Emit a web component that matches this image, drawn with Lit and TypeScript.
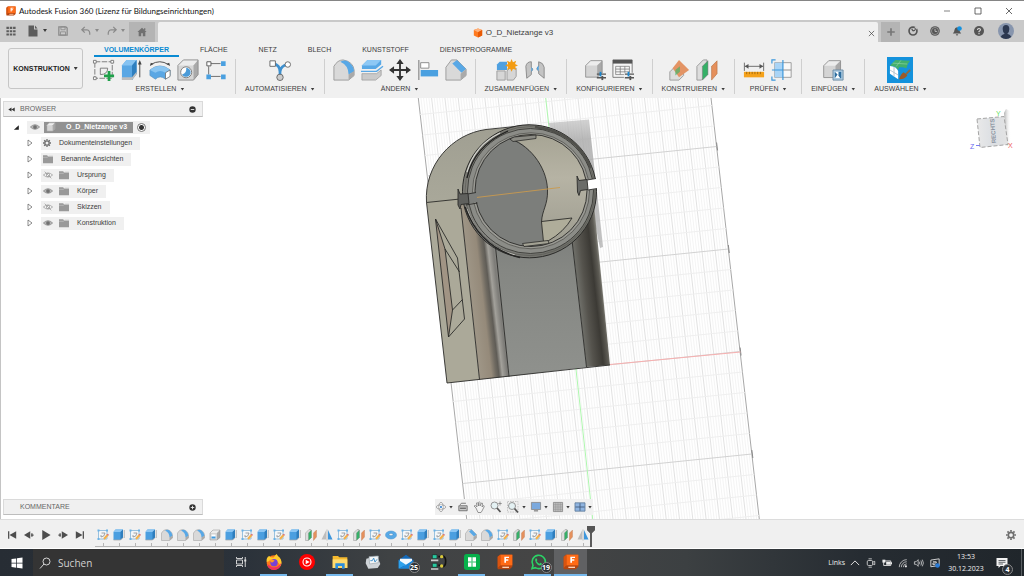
import { LitElement, html, svg, css, nothing } from "lit";
import { customElement } from "lit/decorators.js";
import { classMap } from "lit/directives/class-map.js";

const cube = svg`<path d="M2 8 8 2H22V17L16 22H2Z" fill="#d4d4d4"/><path d="M2 8 8 2H22L16 8Z" fill="#ececec"/><path d="M16 8 22 2V17L16 22Z" fill="#a9a9a9"/><path d="M2 8 8 2H22V17L16 22H2Z" fill="none" stroke="#8c8c8c"/>`;
const sliders = svg`<path d="M14 16.500H24M14 20.500H24" stroke="#555" stroke-width="1.500"/><path d="M18 14V19" stroke="#1a86d0" stroke-width="2"/><path d="M20 18.500V23" stroke="#555" stroke-width="2"/>`;
const fusion = svg`<path d="M4 1H23V19L19 23H1V4Z" fill="#b5450f"/><path d="M5 1H23V17H5Z" fill="#ff6b16"/><path d="M1 4 5 1V17L1 21Z" fill="#d9540f"/><path d="M11 13V4H18V6H13.500V8H17V10H13.500V13Z" fill="#fff"/><path d="M8 20H18" stroke="#ffd2b5" stroke-width="2"/>`;

/* Glyphs share a 24-unit box. */
const glyphs: Record<string, unknown> = {
  app: fusion,
  minus: svg`<path d="M3 12H21" stroke="#444" stroke-width="2"/>`,
  square: svg`<path d="M3 3H21V21H3Z" fill="none" stroke="#444" stroke-width="2.400"/>`,
  close: svg`<path d="M3 3 21 21M21 3 3 21" stroke="#444" stroke-width="2.400"/>`,
  plus: svg`<path d="M12 3V21M3 12H21" stroke="#777" stroke-width="4"/>`,
  grid: svg`<path d="M1 2h6v5H1zM9 2h6v5H9zM17 2h6v5h-6zM1 10h6v5H1zM9 10h6v5H9zM17 10h6v5h-6zM1 18h6v5H1zM9 18h6v5H9zM17 18h6v5h-6z" fill="#5c5c5c"/>`,
  file: svg`<path d="M3 1H14V9H21V23H3Z" fill="#5c5c5c"/><path d="M16 1 21 7H16Z" fill="#5c5c5c"/>`,
  save: svg`<path d="M2 2H19L22 5V22H2Z" fill="none" stroke="#8a8a8a" stroke-width="3"/><path d="M7 2H17V9H7ZM6 14H18V22H6Z" fill="none" stroke="#8a8a8a" stroke-width="2"/>`,
  undo: svg`<path d="M9 2 2 9 9 16M3 9H14Q22 10 21 21" fill="none" stroke="#8a8a8a" stroke-width="3"/>`,
  redo: svg`<path d="M15 2 22 9 15 16M21 9H10Q2 10 3 21" fill="none" stroke="#8a8a8a" stroke-width="3"/>`,
  home: svg`<path d="M12 2 23 12H20V22H14V15H10V22H4V12H1Z" fill="#707070"/><path d="M17 3h3v5h-3z" fill="#707070"/>`,
  doc: svg`<path d="M12 1 22 5V18L12 23 2 18V5Z" fill="#ff7a1f"/><path d="M12 1 22 5 12 10 2 5Z" fill="#ffb27c"/><path d="M12 10 22 5V18L12 23Z" fill="#e85a05"/>`,
  ext: svg`<circle cx="12" cy="12" r="9.500" fill="none" stroke="#555" stroke-width="4"/><path d="M12 12 9 7M12 12 17 10M18 3V9" stroke="#555" stroke-width="3"/><path d="M15 2 22 1 21 9Z" fill="#c4c4c4"/>`,
  clock: svg`<circle cx="12" cy="12" r="11.500" fill="#555"/><circle cx="12" cy="12" r="8.500" fill="none" stroke="#c9c9c9" stroke-width="1.200"/><path d="M12 7V13H17" fill="none" stroke="#c9c9c9" stroke-width="2"/>`,
  bell: svg`<path d="M2 18Q6 14 6 9 7 3 12 3T18 9Q18 14 22 18Z" fill="#555"/><path d="M9 20H15L12 24Z" fill="#555"/><circle cx="18" cy="6" r="5.500" fill="#1492e0"/>`,
  help: svg`<circle cx="12" cy="12" r="12" fill="#555"/><path d="M8.500 9.500Q8.500 6 12 6T15.500 9Q15.500 11 12 13V15M12 17V19.500" fill="none" stroke="#ddd" stroke-width="2.600"/>`,
  avatar: svg`<circle cx="12" cy="12" r="12" fill="#8795ad"/><path d="M12 3Q17 3 17 9 17 14 14 16 19 17 20 21 12 27 4 21 5 17 10 16 7 14 7 9 7 3 12 3Z" fill="#2c3850"/>`,
  sketchNew: svg`<path d="M2 3H21V21H2Z" fill="none" stroke="#777" stroke-dasharray="6 1.500"/><path d="M8 15V10H16Q16 17 8 17Z" fill="none" stroke="#777"/><path d="M.5 1.500h3v3h-3zM19.500 1.500h3v3h-3zM.5 19.500h3v3h-3z" fill="#fff" stroke="#777"/><path d="M17.500 13V24M12 18.500H23" stroke="#1fa04a" stroke-width="3"/>`,
  extrude: svg`<path d="M1 7 6 1H17V16L12 23H1Z" fill="#5aa7e4"/><path d="M1 7 6 1H17L12 7Z" fill="#86c3f2"/><path d="M12 7 17 1V16L12 23Z" fill="#2f7fbf"/><path d="M1 20H12L17 14V17L12 23H1Z" fill="#bdbdbd"/><path d="M20.500 20V4" stroke="#444"/><path d="M18.500 6 20.500 1 22.500 6Z" fill="#444"/>`,
  revolve: svg`<path d="M1 12Q12 3 23 12V18L18 22Q12 17 7 22L1 18Z" fill="#5aa7e4" stroke="#5c93bd" stroke-width=".7"/><path d="M1 12Q12 3 23 12L18 15Q12 11 7 15Z" fill="#8ac5f1"/><path d="M18 15 23 12V19L18 22Z" fill="#fff" stroke="#666" stroke-width=".8"/><path d="M2 6Q12 0 21 6" fill="none" stroke="#444"/><path d="M1 7.500 2 4 5 5.500ZM23 7.500 22 4 19 5.500Z" fill="#444"/>`,
  hole: svg`<path d="M1 7 7 1H23V17L18 23H1Z" fill="#d6d6d6"/><path d="M1 7 7 1H23L18 7Z" fill="#ececec"/><path d="M18 7 23 1V17L18 23Z" fill="#a9a9a9"/><path d="M1 7 7 1H23V17L18 23H1Z" fill="none" stroke="#8c8c8c"/><circle cx="10" cy="14.500" r="6" fill="#fff" stroke="#777"/><path d="M10 9.500A5 5 0 1 1 5.500 17Q11 15 10 9.500Z" fill="#4b9bd8"/>`,
  pattern: svg`<path d="M6 5H17M4 8V17M6 19H17" stroke="#666"/><path d="M2 3h4.500v4.500H2z" fill="#fff" stroke="#555"/><path d="M17.500 2.500h5v5h-5zM1.500 17h5v5h-5zM17.500 17h5v5h-5z" fill="#4aa0e0"/>`,
  auto: svg`<path d="M4 5Q12 6 12 14V19M20 6Q13 7 12 14" fill="none" stroke="#3e90cf" stroke-width="3"/><path d="M1 2h6v6H1z" fill="#fff" stroke="#666"/><circle cx="20.500" cy="6" r="3" fill="#fff" stroke="#666"/><circle cx="12" cy="20" r="3.500" fill="#ccc" stroke="#666"/>`,
  fillet: svg`<path d="M1 8Q5 1 11 1 22 3 23 12V18L17 23H1Z" fill="#d9d9d9" stroke="#999"/><path d="M8 3Q14 0 18 4 23 8 23 14L17 17Q17 7 8 3Z" fill="#58a8e6"/><path d="M17 17 23 13V18L17 23Z" fill="#aaa"/>`,
  press: svg`<path d="M1 7 7 1H22V6L16 11H1Z" fill="#58a8e6"/><path d="M1 7 7 1H22L16 7Z" fill="#8dc8f5"/><path d="M0 13.500H17L24 8" fill="none" stroke="#58a8e6" stroke-width="1.500"/><path d="M1 16H17L22 12V18L16 23H1Z" fill="#cacaca" stroke="#999" stroke-width=".8"/>`,
  move: svg`<path d="M12 3V21M3 12H21" stroke="#333" stroke-width="2"/><path d="M12 0 16 5.500H8ZM12 24 8 18.500H16ZM0 12 5.500 8V16ZM24 12 18.500 16V8Z" fill="#333"/>`,
  align: svg`<path d="M2 1V23" stroke="#888" stroke-width="1.300"/><path d="M4 4H13V10H4Z" fill="#fff" stroke="#888"/><path d="M4 12H23V19H4Z" fill="#4aa0e0"/>`,
  chamfer: svg`<path d="M1 9 7 1H13L23 11V18L17 23H1Z" fill="#d9d9d9" stroke="#999"/><path d="M8 5 13 1 23 11 18 15Z" fill="#58a8e6"/><path d="M17 16 23 11V18L17 23Z" fill="#aaa"/>`,
  join: svg`<path d="M1 6 4 3H12V12H1Z" fill="#4fa0e0"/><path d="M1 13H10V23H1ZM12 13 15 10H22V19L19 23H12Z" fill="#d6d6d6" stroke="#999"/><path d="M17 0 18.500 3.500 22 2 20.800 5.500 24 7 20.800 8.500 22 12 18.500 10.500 17 14 15.500 10.500 12 12 13.200 8.500 10 7 13.200 5.500 12 2 15.500 3.500Z" fill="#f39c12"/>`,
  joint: svg`<path d="M2 8Q3 3 8 3V9Q11 11 8 14V17L3 21Z" fill="#c4c4c4" stroke="#888"/><path d="M22 21 16 16V13Q12 11 16 8V3Q21 4 22 9Z" fill="#c4c4c4" stroke="#888"/><path d="M8 9Q11 11 8 14ZM16 7Q12 10 16 13Z" fill="#4aa0e0"/>`,
  config: svg`<g transform="scale(.9)">${cube}</g>${sliders}`,
  table: svg`<path d="M1 1H22V20H1Z" fill="#f6f6f6" stroke="#777"/><path d="M1 1H22V5H1Z" fill="#555"/><path d="M4 8H19V17H4ZM4 11H19M4 14H19M9 8V17M14 8V17" fill="none" stroke="#777" stroke-width=".8"/><path d="M13 15H24V24H13Z" fill="#f0f0f0"/>${sliders}`,
  planeOff: svg`<path d="M2 14 7 9H17V18L12 23H2Z" fill="#ddd" stroke="#999"/><path d="M12 1 23 12 12 20 5 10Z" fill="#e39465"/><path d="M13 8 8 12V18L13 14Z" fill="#46b36b" opacity=".7"/>`,
  midplane: svg`<path d="M1 8 8 1H12V17L6 23H1Z" fill="#ddd" stroke="#999"/><path d="M7 8 13 2V17L7 23Z" fill="#35b067" stroke="#777" stroke-width=".6"/><path d="M17 8 23 2V16L17 23Z" fill="#e5905c" stroke="#b06a3d" stroke-width=".6"/>`,
  measure: svg`<path d="M2 8H22M1.500 4V13M22.500 4V13" stroke="#666"/><path d="M2 8 6 5.500V10.500ZM22 8 18 5.500V10.500Z" fill="#555"/><path d="M1 14H23V20H1Z" fill="#f5a21b"/><path d="M4 14V16.500M7 14V16.500M10 14V16.500M13 14V16.500M16 14V16.500M19 14V16.500" stroke="#8d5a08" stroke-width=".8"/>`,
  section: svg`<path d="M4 4H22V20H4Z" fill="#f8f8f8" stroke="#999"/><path d="M4 4H13V20H4Z" fill="#a9d4f6"/><path d="M1 5V1H5M1 19V23H5M13 1V23M1 12H13" fill="none" stroke="#3b97db" stroke-width="1.300"/><path d="M13 12H22" stroke="#888"/>`,
  insert: svg`<g transform="scale(.92)">${cube}</g><path d="M12 12H23V23H12Z" fill="#aecde4" stroke="#6c8ba3"/><path d="M14 14H21V21H14Z" fill="#2f6e9f"/><path d="M14 14 18 18V14ZM14 21 17 17 20 21Z" fill="#fff"/>`,
  select: svg`<path d="M1 7 7 1 23 2Q20 5 19 10L15 9 11 9 10 12Q8 8 1 7Z" fill="#43b06c"/><path d="M4 4.500 20 5.500M13 1.500 8 8" fill="none" stroke="#8fd3a8" stroke-width=".7"/><path d="M1 7.500Q8 8 10 13V22L1 16Z" fill="#fff"/><path d="M1 12 10 17.500M5.500 8.500V19" stroke="#b3c4cd"/><path d="M23 12 18 17" stroke="#8b6a45" stroke-width="2"/><path d="M16 14.500 20 18Q17 22.500 11 22 13 16 16 14.500Z" fill="#9c5a28"/>`,
  body: svg`${cube}`,
  eye: svg`<path d="M1 12Q12 1 23 12 12 23 1 12Z" fill="#b5b5b5" stroke="#8e8e8e" stroke-width="2"/><circle cx="12" cy="12" r="4.500" fill="#707070"/>`,
  eyeOff: svg`<path d="M1 12Q12 2 23 12 12 22 1 12Z" fill="#f4f4f4" stroke="#9a9a9a" stroke-width="1.800"/><circle cx="12" cy="12" r="4" fill="none" stroke="#9a9a9a" stroke-width="1.800"/><path d="M4 4 20 20" stroke="#9a9a9a" stroke-width="1.800"/>`,
  folder: svg`<path d="M0 3H10L12 6H24V22H0Z" fill="#999"/><path d="M0 8H11L14 5H24" fill="none" stroke="#c6c6c6" stroke-width="1.500"/>`,
  gear: svg`<circle cx="12" cy="12" r="6.500" fill="none" stroke="#6e6e6e" stroke-width="4"/><path d="M12 0V4M12 20V24M0 12H4M20 12H24M3.500 3.500 6.500 6.500M17.500 17.500 20.500 20.500M20.500 3.500 17.500 6.500M6.500 17.500 3.500 20.500" stroke="#6e6e6e" stroke-width="4"/>`,
  triRight: svg`<path d="M6 3 18 12 6 21Z" fill="#fff" stroke="#555" stroke-width="2"/>`,
  triOpen: svg`<path d="M20 4V20H3Z" fill="#222"/>`,
  collapse: svg`<path d="M12 5V19L1 12ZM23 5V19L12 12Z" fill="#333"/>`,
  dotMinus: svg`<circle cx="12" cy="12" r="11" fill="#333"/><path d="M6 12H18" stroke="#eee" stroke-width="3"/>`,
  dotPlus: svg`<circle cx="12" cy="12" r="11" fill="#333"/><path d="M6 12H18M12 6V18" stroke="#eee" stroke-width="3"/>`,
  orbit: svg`<ellipse cx="12" cy="12" rx="11" ry="5" fill="none" stroke="#888" stroke-width="1.600"/><ellipse cx="12" cy="12" rx="5" ry="11" fill="none" stroke="#888" stroke-width="1.600"/><path d="M12 8V16M8 12H16" stroke="#f4f7fa" stroke-width="5"/><circle cx="12" cy="12" r="2.500" fill="#2f7fd0"/>`,
  look: svg`<path d="M2 9H22V21H2Z" fill="#c9c9c9" stroke="#666" stroke-width="2"/><path d="M5 15H19" stroke="#666" stroke-width="3"/><path d="M5 7 8 3H19" fill="none" stroke="#666" stroke-width="2"/>`,
  hand: svg`<path d="M6 14 2 10Q4 7 8 12L7 4Q9 2 10 5L11 10V3Q13 0 14 3V10L17 4Q19 3 19 6L18 12 21 9Q23 9 22 12L18 20 16 23H10Z" fill="#f4f4f4" stroke="#777" stroke-width="1.500"/>`,
  zoom: svg`<circle cx="9" cy="9" r="7" fill="#e4f1f3" stroke="#8a8a8a" stroke-width="1.800"/><path d="M14 14 21 22" stroke="#555" stroke-width="3.500"/><path d="M20 1V9M16.500 5H23.500" stroke="#777" stroke-width="1.400"/>`,
  fit: svg`<path d="M1 1H22V22H1Z" fill="none" stroke="#999" stroke-dasharray="3 2"/><circle cx="10" cy="10" r="7" fill="#e4f1f3" stroke="#8a8a8a" stroke-width="1.800"/><path d="M15 15 22 23" stroke="#555" stroke-width="3.500"/>`,
  screen: svg`<path d="M1 1H23V18H1Z" fill="#7ba9dd" stroke="#888" stroke-width="2"/><path d="M7 21H17" stroke="#999" stroke-width="4"/>`,
  mesh: svg`<path d="M1 1H23V23H1Z" fill="#bdbdbd" stroke="#777" stroke-width="1.600"/><path d="M1 6.500H23M1 12H23M1 17.500H23M6.500 1V23M12 1V23M17.500 1V23" stroke="#888"/>`,
  views: svg`<path d="M0 2H24V22H0Z" fill="#8fb4e0" stroke="#5d7897" stroke-width="2"/><path d="M12 3V21M1 12H23" stroke="#3c5674" stroke-width="2"/>`,
  first: svg`<path d="M4 3V21" stroke="#4d4d4d" stroke-width="3"/><path d="M22 3V21L6 12Z" fill="#4d4d4d"/>`,
  prev: svg`<path d="M15 3V21L0 12Z" fill="#4d4d4d"/><path d="M17 12H23M19 8V16" stroke="#4d4d4d" stroke-width="3"/>`,
  play: svg`<path d="M3 0 23 12 3 24Z" fill="#4d4d4d"/>`,
  next: svg`<path d="M9 3V21L24 12Z" fill="#4d4d4d"/><path d="M1 12H7M5 8V16" stroke="#4d4d4d" stroke-width="3"/>`,
  last: svg`<path d="M20 3V21" stroke="#4d4d4d" stroke-width="3"/><path d="M2 3V21L18 12Z" fill="#4d4d4d"/>`,
  tSketch: svg`<path d="M3 3H20V20H3Z" fill="#f2f6f9" stroke="#8fbbdb" stroke-width="1.800"/><path d="M9 8H16Q15 16 8 16V12" fill="none" stroke="#8a8a8a" stroke-width="1.500"/><path d="M1 1h4v4H1zM18 1h4v4h-4zM1 18h4v4H1z" fill="#6bb2e6"/><path d="M21 12 14 20" stroke="#f4b04a" stroke-width="4"/><path d="M22.500 10.500 21 12.500" stroke="#d8707f" stroke-width="4"/>`,
  tExtrude: svg`<path d="M1 6 5 1H20V17L15 22H1Z" fill="#4b9fe0"/><path d="M1 6 5 1H20L15 6Z" fill="#8cc6f3"/><path d="M15 6 20 1V17L15 22Z" fill="#2f7ebd"/><path d="M22.500 2V18" stroke="#999" stroke-width="1.300"/><path d="M1 22H15L20 17" fill="none" stroke="#aaa" stroke-width="1.500"/>`,
  tShell: svg`${cube}<path d="M5 11H13V19H5Z" fill="#fff"/><path d="M5 15H13V19H5Z" fill="#3f9be0"/>`,
  tMirror: svg`<path d="M10 3V21H1Z" fill="#bdbdbd"/><path d="M14 2 23 21H14Z" fill="#3d96dc"/><path d="M12 1V23" stroke="#888"/>`,
  tTorus: svg`<ellipse cx="12" cy="12" rx="11" ry="8" fill="#57a9e7" stroke="#4a92cb"/><ellipse cx="12" cy="11" rx="4" ry="2.500" fill="#f0f0f0" stroke="#2f7ebd"/>`,
  win: svg`<path d="M1 4 10.500 3V11.500H1ZM12 2.700 23 1V11.500H12ZM1 13H10.500V21.500L1 20ZM12 13H23V23L12 21.500Z" fill="#fff"/>`,
  search: svg`<circle cx="15" cy="9" r="7" fill="none" stroke="#e6e6e6" stroke-width="1.800"/><path d="M10 14 2 23" stroke="#e6e6e6" stroke-width="1.800"/>`,
  taskview: svg`<path d="M3 2V5H15V2M3 22V19H15V22M3 8H15V16H3Z" fill="none" stroke="#e0e0e0" stroke-width="1.800"/><path d="M20.500 2V22" stroke="#e0e0e0" stroke-width="1.800"/><path d="M18.500 7H22.500V11H18.500Z" fill="#e0e0e0"/>`,
  firefox: svg`<circle cx="12" cy="13" r="11" fill="#ff7a1a"/><path d="M1 12Q0 5 5 3 7 6 12 5 13 2 16 0 18 4 21 6 25 12 22 18 17 8 9 9Z" fill="#ffcb2e"/><path d="M2 15Q3 24 13 24 22 22 23 13 17 22 8 19Z" fill="#f0315e"/><circle cx="12" cy="13" r="5.500" fill="#7542d6"/><path d="M4 9Q9 7 13 10L9 13Z" fill="#ff9a1f"/>`,
  yt: svg`<circle cx="12" cy="12" r="12" fill="#f00"/><circle cx="12" cy="12" r="6" fill="none" stroke="#fff" stroke-width="1.600"/><path d="M10 8.500 16 12 10 15.500Z" fill="#fff"/>`,
  explorer: svg`<path d="M1 3H9L11 5H23V21H1Z" fill="#f5b92e"/><path d="M1 8H23V21H1Z" fill="#ffdb6e"/><path d="M5 22V14H19V22H15V18H9V22Z" fill="#2d8fdc"/>`,
  monitor: svg`<path d="M2 7 18 3 23 15 19 21 5 22 1 14Z" fill="#cfd4d8"/><path d="M6 4 20 3V13L7 15Z" fill="#f3f6f8" stroke="#9aa4ac"/><path d="M8 10 11 10 13 6 15 12 18 8" fill="none" stroke="#4a96cc" stroke-width="1.500"/>`,
  mail: svg`<path d="M1 9 12 1 23 9V21H1Z" fill="#1368b8"/><path d="M3 7H21V14L12 18 3 14Z" fill="#f4f9fd"/><path d="M1 9 12 16 1 22Z" fill="#2ea2ec"/><path d="M23 9 9 18 1 22H23Z" fill="#1c86d8"/>`,
  net: svg`<path d="M2 1H9V7H2ZM2 14H9V20H2Z" fill="#27c9a0" stroke="#222"/><path d="M0 9.500H11M0 22.500H11" stroke="#ccc" stroke-width="2.500"/><path d="M11 4H14M11 17H14M18 3Q22 4 22 11 22 18 18 19" fill="none" stroke="#111" stroke-width="2.500"/><circle cx="16" cy="4" r="2.500" fill="#d9c93b"/><circle cx="16" cy="18" r="2.500" fill="#d9c93b"/>`,
  green: svg`<rect width="24" height="24" rx="4" fill="#07b04b"/><path d="M6 5H11.300V19H6ZM12.700 5H18V19H12.700Z" fill="#fff"/><path d="M6 12H11.300M12.700 12H18" stroke="#07b04b" stroke-width="1.300"/>`,
  whatsapp: svg`<path d="M3 22 4.500 17A10 10 0 1 1 8 20.500Z" fill="none" stroke="#2bd366" stroke-width="2.400"/><path d="M8 7Q10 5 11 9L10 11Q12 14 14 14.500L16 13Q19 14 17 16.500 13 19 9 13 7 9 8 7Z" fill="#2bd366"/>`,
  chevron: svg`<path d="M2 17 12 7 22 17" fill="none" stroke="#eee" stroke-width="2.200"/>`,
  cam: svg`<rect x="3" y="6" width="13" height="12" rx="3" fill="none" stroke="#eee" stroke-width="1.800"/><path d="M16 10 21 8V16L16 14M6 2H14M6 22H14" fill="none" stroke="#eee" stroke-width="1.800"/>`,
  battery: svg`<path d="M4 7H21V18H4Z" fill="none" stroke="#eee" stroke-width="2"/><path d="M10 9H20V16H10ZM21 10H24V15H21Z" fill="#eee"/><path d="M1 4H8V11H1Z" fill="#eee"/>`,
  wifi: svg`<path d="M3 22A18 18 0 0 1 21 4M8 22A13 13 0 0 1 21 9M13 22A8 8 0 0 1 21 14" fill="none" stroke="#ddd" stroke-width="1.800"/><circle cx="19" cy="20" r="2.500" fill="#eee"/>`,
  sound: svg`<path d="M1 9H5L10 4V20L5 15H1Z" fill="none" stroke="#eee" stroke-width="1.600"/><path d="M13 9Q15 12 13 15M16.500 6Q20 12 16.500 18M20 4Q25 12 20 20" fill="none" stroke="#eee" stroke-width="1.600"/>`,
  pen: svg`<path d="M2 5 22 2V18L2 21Z" fill="none" stroke="#eee" stroke-width="2"/><path d="M7 9H15V12H7V16H13" fill="none" stroke="#eee" stroke-width="2"/><circle cx="18" cy="18" r="5.500" fill="#2b7bd6"/>`,
  note: svg`<path d="M1 2H23V18H9L5 22V18H1Z" fill="#f2f2f2"/><path d="M5 7H19M5 10.500H19M5 14H14" stroke="#30363c" stroke-width="1.500"/>`,
};
glyphs.tFillet = glyphs.fillet;
glyphs.tChamfer = glyphs.chamfer;
glyphs.tPlane = glyphs.midplane;

const icon = (name: string, size: string) =>
  html`<svg class="icon ${size}" viewBox="0 0 24 24" aria-hidden="true">${glyphs[name]}</svg>`;
const caret = html`<span class="caret"></span>`;

const tabs = ["VOLUMENKÖRPER", "FLÄCHE", "NETZ", "BLECH", "KUNSTSTOFF", "DIENSTPROGRAMME"];

const groups = [
  { label: "ERSTELLEN", tools: ["sketchNew", "extrude", "revolve", "hole", "pattern"] },
  { label: "AUTOMATISIEREN", tools: ["auto"] },
  { label: "ÄNDERN", tools: ["fillet", "press", "move", "align", "chamfer"] },
  { label: "ZUSAMMENFÜGEN", tools: ["join", "joint"] },
  { label: "KONFIGURIEREN", tools: ["config", "table"] },
  { label: "KONSTRUIEREN", tools: ["planeOff", "midplane"] },
  { label: "PRÜFEN", tools: ["measure", "section"] },
  { label: "EINFÜGEN", tools: ["insert"] },
  { label: "AUSWÄHLEN", tools: ["select"] },
];

const nodes = [
  { label: "Dokumenteinstellungen", icons: ["gear"] },
  { label: "Benannte Ansichten", icons: ["folder"] },
  { label: "Ursprung", icons: ["eyeOff", "folder"] },
  { label: "Körper", icons: ["eye", "folder"] },
  { label: "Skizzen", icons: ["eyeOff", "folder"] },
  { label: "Konstruktion", icons: ["eye", "folder"] },
];

const features = (
  "tSketch tExtrude tSketch tExtrude tFillet tFillet tFillet tShell tExtrude tSketch tExtrude tSketch tExtrude tPlane tMirror " +
  "tSketch tPlane tSketch tTorus tSketch tExtrude tSketch tExtrude tChamfer tFillet tSketch tPlane tSketch tExtrude tPlane tMirror"
).split(" ");

const apps: { icon: string; badge?: string; open?: boolean; active?: boolean }[] = [
  { icon: "taskview" },
  { icon: "firefox", open: true },
  { icon: "yt" },
  { icon: "explorer", open: true },
  { icon: "monitor" },
  { icon: "mail", badge: "25" },
  { icon: "net" },
  { icon: "green", open: true },
  { icon: "app" },
  { icon: "whatsapp", badge: "19", open: true },
  { icon: "app", open: true, active: true },
];

/* Ground grid: a slanted sheet between two long edges. */
const leftX = (y: number) => 418.3 + 0.115 * (y - 98);
const rightX = (y: number) => 711 + 0.1147 * (y - 98);

function gridLines() {
  const out = [];
  const cells = 22;
  for (let i = 0; i <= cells * 5; i++) {
    const t = i / (cells * 5);
    const a = leftX(98) + (rightX(98) - leftX(98)) * t;
    const b = leftX(519) + (rightX(519) - leftX(519)) * t;
    const kind = i === 0 || i === cells * 5 ? "edge" : i % 5 === 0 ? "cell" : "fine";
    out.push(svg`<line class=${kind} x1=${a} y1="98" x2=${b} y2="519"/>`);
  }
  for (let k = -3; k < 22; k++) {
    const y = 146.5 + 20.5 * k;
    const yl = y + 29.5;
    out.push(svg`<line class=${k % 5 === 0 ? "major" : "row"} x1=${rightX(y)} y1=${y} x2=${leftX(yl)} y2=${yl}/>`);
    if (k % 5 === 0) out.push(svg`<line class="tick" x1=${rightX(y)} y1=${y - 4} x2=${rightX(y) + 1} y2=${y + 4}/>`);
  }
  return out;
}

@customElement("fusion-scene")
class FusionScene extends LitElement {
  static styles = css`
    :host { display: block; width: 100%; height: 100%; }
    .scene { display: block; width: 100%; height: 100%; }
    line { stroke-width: 1; }
    .fine { stroke: #f4f4f4; }
    .cell { stroke: #e2e2e2; }
    .row { stroke: #efefef; }
    .major { stroke: #d2d2d2; }
    .edge { stroke: #a8a8a8; }
    .tick { stroke: #888; }
    .ink { fill: none; stroke: #2b2b29; stroke-width: 0.9; }
    .axis { font: 7px "Liberation Sans", Arial, sans-serif; }
    .face { font: bold 6px "Liberation Sans", Arial, sans-serif; fill: #8b93a0; }
  `;

  render() {
    return html`<svg class="scene" viewBox="0 98 1024 421" preserveAspectRatio="xMaxYMid slice" role="img" aria-label="O_D_Nietzange v3">
      <defs>
        <linearGradient id="strip" gradientUnits="userSpaceOnUse" x1="467" y1="300" x2="502" y2="296">
          <stop offset="0" stop-color="#a29a8b"/><stop offset=".45" stop-color="#958a7a"/><stop offset=".58" stop-color="#6f6a61"/>
          <stop offset=".66" stop-color="#5f5c56"/><stop offset=".76" stop-color="#a3a19b"/><stop offset=".9" stop-color="#7d7c78"/><stop offset="1" stop-color="#8a8a86"/>
        </linearGradient>
        <linearGradient id="dark" gradientUnits="userSpaceOnUse" x1="577" y1="300" x2="604" y2="297">
          <stop offset="0" stop-color="#777872"/><stop offset=".35" stop-color="#55534d"/><stop offset=".7" stop-color="#3c3a35"/><stop offset=".9" stop-color="#5d5b54"/><stop offset="1" stop-color="#85847c"/>
        </linearGradient>
        <linearGradient id="side" x1="0" y1="0" x2="0" y2="1"><stop offset="0" stop-color="#a09f92"/><stop offset="1" stop-color="#afae9f"/></linearGradient>
        <linearGradient id="front" x1="0" y1="0" x2="0" y2="1"><stop offset="0" stop-color="#7c7e7b"/><stop offset=".3" stop-color="#858783"/><stop offset="1" stop-color="#8f918d"/></linearGradient>
        <linearGradient id="ring" x1="0" y1="0" x2="1" y2="1"><stop offset="0" stop-color="#77776f"/><stop offset=".5" stop-color="#858581"/><stop offset="1" stop-color="#65665f"/></linearGradient>
        <linearGradient id="bore" x1="0" y1="0" x2="0" y2="1"><stop offset="0" stop-color="#a5a393"/><stop offset=".4" stop-color="#b6b3a4"/><stop offset="1" stop-color="#9b9a8e"/></linearGradient>
        <linearGradient id="shade" x1="0" y1="0" x2="0" y2="1"><stop offset="0" stop-color="#c4c4c4" stop-opacity=".75"/><stop offset=".15" stop-color="#a8a8a8" stop-opacity=".8"/><stop offset="1" stop-color="#a8a8a8" stop-opacity=".7"/></linearGradient>
        <linearGradient id="cube" x1="0" y1="0" x2="1" y2="0"><stop offset="0" stop-color="#e9e9e9"/><stop offset=".5" stop-color="#dcdfe3"/><stop offset="1" stop-color="#e3e3e3"/></linearGradient>
        <linearGradient id="glow" x1="0" y1="0" x2="1" y2="0"><stop offset="0" stop-color="#b0b0b0"/><stop offset="1" stop-color="#fff" stop-opacity="0"/></linearGradient>
        <clipPath id="hole"><ellipse cx="531" cy="190.500" rx="56" ry="56"/></clipPath>
      </defs>
      <rect x="0" y="98" width="1024" height="421" fill="#fff"/>
      ${gridLines()}
      <path d="M545.700 98 592.700 519" stroke="#aef7ae"/>
      <path d="M610 364.500 740.500 352" stroke="#f8b0b0"/>
      <path d="M548 123 589 119.500 603 247 600 248 590 200Z" fill="url(#shade)"/>

      <path d="M426.500 202.500C424 165 452 134 486 129.500L530 126V258L461 205Z" fill="url(#side)"/>
      <path d="M426.500 202.500 460 198 479.500 379.500 447 383Z" fill="#aba999"/>
      <path d="M460 200 496 240 509 376.500 479.500 379.500Z" fill="url(#strip)"/>
      <path d="M493 225 572 235 586.500 367 509 376.500Z" fill="url(#front)"/>
      <path d="M571 230 594 205 610 365 586.500 367Z" fill="url(#dark)"/>
      <path class="ink" d="M486 129.500C452 134 424 165 426.500 202.500L447 383 610 365 M486 129.500 530 125M426.500 202.500 460 199M461 208 479.500 379.500M495.500 247 509 376.500M572 240 586.500 367"/>
      <path d="M435.500 219 445 249 452.500 310 448.500 337Z" fill="#a19484"/>
      <path class="ink" d="M435.500 219 457.500 258 464.500 319 448.500 337Z M435.500 219 445 249 452.500 310 448.500 337 M445 249 459.500 272 M452.500 310 462.500 299.500"/>

      <ellipse cx="529.500" cy="191.300" rx="67" ry="66.500" fill="url(#ring)" stroke="#2b2b29"/>
      <ellipse cx="530" cy="191.100" rx="65" ry="64.500" fill="none" stroke="#5a5a55" stroke-width=".7"/>
      <path d="M467 172Q475 145 500 133" fill="none" stroke="#d6d6d0" stroke-width="1.200"/>
      <path d="M467 178Q474 146 508 131" fill="none" stroke="#1f1f1e" stroke-width="1.300"/>
      <path d="M467 209Q480 246 515 255" fill="none" stroke="#bdbdb7"/>
      <path d="M465 207Q480 248 520 257.500" fill="none" stroke="#242423" stroke-width="1.500"/>
      <path d="M535 127Q575 131 591 168" fill="none" stroke="#50504b" stroke-width="2.500"/>
      <ellipse cx="530.500" cy="191" rx="63" ry="62.500" fill="#8b8c87" stroke="#32322f" stroke-width=".8"/>
      <ellipse cx="531" cy="190.800" rx="58.500" ry="58" fill="#9a9a94" stroke="#4a4a46" stroke-width=".7"/>
      <g clip-path="url(#hole)">
        <rect x="470" y="130" width="122" height="122" fill="#7c7e7b"/>
        <path d="M505 136C528 142 547 166 547.500 190C548 205 542 210 541.500 222L544 250H592V130H505Z" fill="url(#bore)"/>
        <path d="M541.500 221.500 572 218Q564 232 548 241L543.500 243Z" fill="#afad9a"/>
        <path class="ink" d="M507 138C528 143 547 166 547.500 190C548 205 542 210 541.500 222L543.500 242M541.500 221.500 572 218Q564 232 548 241"/>
      </g>
      <ellipse class="ink" cx="531" cy="190.500" rx="56" ry="56"/>
      <path d="M510 139 514 137 536 135V138.500L513 141.500Z" fill="#8b8b84" stroke="#2b2b29" stroke-width=".8"/>
      <path d="M522.500 243.500 548 240.500 549 243.500 524 246.500Z" fill="#a3a294" stroke="#2b2b29" stroke-width=".8"/>
      <path d="M468 198.500 560 187.500" stroke="#c99a4e" stroke-width=".9"/>

      <path d="M463 194.500 477 192V202L465 204.500Z" fill="#7c7e7b"/>
      <path class="ink" d="M465 194.500 476 192.500M466 205 477.500 203"/>
      <path d="M458 189 460 194 468 193.500 469 203.500 461 204.500 460 209 458 205Z" fill="#5f605d" stroke="#2b2b29" stroke-width=".9"/>
      <path d="M586 180 599 178 600 188.500 587 190Z" fill="#fff"/>
      <path class="ink" d="M587 180 596 178.500M588 190 597 188.500"/>
      <path d="M577 176 579 180.500 587 179.500 588 189.500 580.500 190.500 579 195.500 577.500 192Z" fill="#6b6c69" stroke="#2b2b29" stroke-width=".9"/>

      <path d="M1004 113 1006 109 1010 111 1011 145 1007 146Z" fill="url(#glow)"/>
      <path d="M977 119 1004 116.500 1008 144.500 980 147.500Z" fill="url(#cube)" stroke="#a5a5a5" stroke-dasharray="4 2"/>
      <path d="M976 145.500H980" stroke="#7d7df2"/>
      <text class="face" transform="translate(996 143) rotate(-94)">RECHTS</text>
      <text class="axis" x="996" y="116" fill="#5fe05f">Y</text>
      <text class="axis" x="1008" y="148" fill="#f06060">X</text>
      <text class="axis" x="970" y="149" fill="#6a6af0">Z</text>
    </svg>`;
  }
}

@customElement("app-root")
class AppRoot extends LitElement {
  static styles = css`
    :host { display: block; height: 100vh; font: 7px/10px "Liberation Sans", Arial, sans-serif; color: #3c3c3c; }
    * { box-sizing: border-box; }
    button, input { font: inherit; color: inherit; margin: 0; padding: 0; border: 0; background: none; }
    button { display: flex; align-items: center; justify-content: center; white-space: nowrap; }
    ul { list-style: none; margin: 0; padding: 0; }
    .icon { display: block; flex: none; overflow: visible; }
    .s7 { width: 7px; height: 7px; }
    .s8 { width: 8px; height: 8px; }
    .s10 { width: 10px; height: 10px; }
    .s12 { width: 12px; height: 12px; }
    .s16 { width: 16px; height: 16px; }
    .s22 { width: 22px; height: 22px; }
    .caret { flex: none; width: 4px; height: 3px; background: #3c3c3c; clip-path: polygon(0 0, 100% 0, 50% 100%); }
    .app { display: flex; flex-direction: column; height: 100%; overflow: hidden; background: #f0f0f0; }

    .title { display: flex; align-items: center; height: 20px; padding-left: 6px; border-top: 1px solid #858585; background: #fff; color: #111; font: 8px/12px Lato, sans-serif; }
    .title .name { flex: 1; margin-left: 3px; }
    .win { width: 31px; height: 19px; }

    .bar { display: flex; align-items: stretch; height: 22px; padding: 1px 0 0 1px; background: #c9c9c9; }
    .quick { display: flex; align-items: center; width: 128px; padding: 0 0 2px 5px; }
    .quick button { gap: 4px; }
    .quick .file { margin-left: 11px; }
    .quick .save { margin-left: 11px; }
    .quick .undo { margin-left: 13px; }
    .quick .redo { margin-left: 8px; }
    .quick .undo .caret, .quick .redo .caret { background: #8a8a8a; }
    .homeTab { width: 26px; margin: 1px 3px 0 0; background: #b4b4b4; }
    .docTab { display: flex; flex: 1; align-items: center; margin-top: 1px; padding: 2px 3px 0 0; border-radius: 2px 2px 0 0; background: #f0f0f0; font: 8px/10px "Liberation Sans", Arial, sans-serif; }
    .docName { display: flex; flex: 1; align-items: center; justify-content: center; gap: 3px; }
    .add { width: 19px; margin: 1px 0 0 3px; background: #b4b4b4; }
    .account { display: flex; align-items: center; padding: 0 10px 2px 2px; }
    .account button { width: 22px; }
    .account .user { margin-left: 8px; width: 16px; }

    .ribbon { display: flex; height: 56px; padding: 0 8px; }
    .mode { width: 75px; height: 41px; margin-top: 6px; gap: 4px; border: 1px solid #c6c6c6; border-radius: 3px; font-weight: bold; color: #222; }
    .tools { flex: 1; margin-left: 10px; }
    .tabs { display: flex; gap: 11px; margin-left: 1px; }
    .tab { height: 15px; padding: 2px 10px 0; border-bottom: 2px solid transparent; }
    .tab.on { border-color: #0a8ad2; color: #0a8ad2; font-weight: bold; }
    .groups { display: flex; padding-top: 2px; }
    .group { display: flex; flex-direction: column; align-items: center; gap: 3px; height: 35px; padding: 0 8px; border-right: 1px solid #cfcfcf; }
    .group:first-child { padding-left: 0; }
    .group:last-child { border: 0; }
    .row { display: flex; gap: 6px; }
    .label { gap: 4px; padding: 0 1px; }
    .picked { background: #1492dc; box-shadow: 0 0 0 2px #1492dc; }

    .view { position: relative; flex: 1; min-height: 0; border-left: 1px solid #c4c4c4; overflow: hidden; background: #fff; }
    .backdrop { position: absolute; inset: 0; }
    .overlay { position: relative; display: flex; flex-direction: column; justify-content: space-between; height: 100%; padding: 3px 2px 4px; }
    .panel { display: flex; align-items: center; width: 200px; height: 16px; padding: 0 6px 0 4px; border: 1px solid #dadada; border-bottom-color: #bdbdbd; background: #f0f0f0; color: #666; }
    .panel .text { flex: 1; margin-left: 5px; }
    .panel.notes .text { margin-left: 12px; }
    .tree { padding-top: 2px; }
    .node { display: flex; align-items: center; height: 16px; padding-left: 23px; gap: 7px; }
    .node.root { padding-left: 10px; }
    .chip { display: flex; align-items: center; height: 13px; padding: 0 8px 0 2px; background: #f0f0f0; }
    .chip .icon + .icon { margin-left: 6px; }
    .chip .text { margin-left: 8px; }
    .root .chip { gap: 4px; padding: 0 4px 0 3px; }
    .current { display: flex; align-items: center; height: 11px; padding: 0 6px 0 2px; background: #919191; color: #fff; font-weight: bold; }
    .current .text { margin-left: 10px; }
    .radio { appearance: none; width: 9px; height: 9px; border: 1px solid #777; border-radius: 50%; background: radial-gradient(#333 0 2px, #fff 3px); }
    .foot { display: flex; align-items: flex-end; gap: 232px; }
    .nav { display: flex; align-items: center; gap: 5px; height: 16px; padding: 0 1px; background: #f0f0f0; }
    .nav button { gap: 3px; }

    .timeline { display: flex; height: 30px; padding: 0 8px 0 3px; border-top: 1px solid #dcdcdc; border-bottom: 1px solid #fff; }
    .play { display: flex; margin-right: 7px; padding-top: 2px; }
    .play button { width: 17px; }
    .features { display: flex; align-self: flex-start; padding-top: 9px; }
    .feature { display: flex; flex-direction: column; align-items: center; gap: 2px; width: 16px; height: 18px; border-bottom: 1px solid #b5b5b5; }
    .feature::after { content: ""; width: 1px; height: 3px; background: #b5b5b5; }
    .marker { width: 8px; height: 21px; margin: 6px 0 0 -4px; background: #555; clip-path: polygon(0 0, 100% 0, 100% 20%, 62% 35%, 62% 100%, 38% 100%, 38% 35%, 0 20%); }
    .settings { margin: 2px 0 0 auto; }

    .task { display: flex; height: 27px; background: linear-gradient(90deg, #272d34 0, #2b323a 24%, #3f4244 38%, #454545 52%, #3c4042 67%, #262c32 84%, #20262b); color: #eee; font: 7px/12px "Open Sans", sans-serif; }
    .start { width: 33px; }
    .find { display: flex; align-items: center; width: 191px; padding-left: 6px; gap: 7px; background: #343434; font: 10px/14px "Open Sans", sans-serif; }
    .find input { flex: 1; min-width: 0; outline: 0; }
    .find input::placeholder { color: #d2d2d2; opacity: 1; }
    .app-btn { position: relative; width: 33px; border-bottom: 2px solid transparent; }
    .app-btn.open::after { content: ""; position: absolute; left: 3px; right: 3px; bottom: -2px; height: 2px; background: #76b9ed; }
    .app-btn.active { background: #606163; }
    .app-btn.active::after { left: 0; right: 0; }
    .badge { position: absolute; left: 50%; bottom: 1px; min-width: 11px; height: 11px; margin-left: 3px; border: 1px solid #888; border-radius: 6px; background: #2b3036; color: #fff; font: bold 7px/9px "Open Sans", sans-serif; text-align: center; }
    .tray { display: flex; align-items: center; margin: 0 2px 0 auto; border-right: 1px solid #5a5f63; }
    .tray button { width: 16px; height: 27px; }
    .tray .links { width: auto; padding-right: 2px; }
    .clock { width: 46px; text-align: center; }
    .tray .notify { position: relative; width: 32px; padding-right: 6px; }
    .tray .notify .badge { margin-left: -3px; }
  `;

  render() {
    return html`<div class="app">
      <header class="title">
        ${icon("app", "s10")}<span class="name">Autodesk Fusion 360 (Lizenz für Bildungseinrichtungen)</span>
        <button class="win" aria-label="Minimieren">${icon("minus", "s8")}</button>
        <button class="win" aria-label="Maximieren">${icon("square", "s8")}</button>
        <button class="win" aria-label="Schließen">${icon("close", "s8")}</button>
      </header>

      <div class="bar">
        <div class="quick">
          <button aria-label="Daten">${icon("grid", "s10")}</button>
          <button class="file" aria-label="Datei">${icon("file", "s12")}${caret}</button>
          <button class="save" aria-label="Speichern">${icon("save", "s10")}</button>
          <button class="undo" aria-label="Rückgängig">${icon("undo", "s10")}${caret}</button>
          <button class="redo" aria-label="Wiederholen">${icon("redo", "s10")}${caret}</button>
        </div>
        <button class="homeTab" aria-label="Start">${icon("home", "s10")}</button>
        <div class="docTab">
          <span class="docName">${icon("doc", "s10")}<span>O_D_Nietzange v3</span></span>
          <button aria-label="Dokument schließen">${icon("close", "s7")}</button>
        </div>
        <button class="add" aria-label="Neu">${icon("plus", "s10")}</button>
        <div class="account">
          <button aria-label="Erweiterungen">${icon("ext", "s10")}</button>
          <button aria-label="Auftragsstatus">${icon("clock", "s10")}</button>
          <button aria-label="Mitteilungen">${icon("bell", "s10")}</button>
          <button aria-label="Hilfe">${icon("help", "s10")}</button>
          <button class="user" aria-label="Konto">${icon("avatar", "s16")}</button>
        </div>
      </div>

      <div class="ribbon">
        <button class="mode">KONSTRUKTION ${caret}</button>
        <div class="tools">
          <nav class="tabs">${tabs.map((t, i) => html`<button class=${classMap({ tab: true, on: i === 0 })}>${t}</button>`)}</nav>
          <div class="groups">
            ${groups.map(
              (g) => html`<div class="group">
                <div class="row">${g.tools.map((t) => html`<button class=${classMap({ picked: t === "select" })} aria-label=${g.label}>${icon(t, "s22")}</button>`)}</div>
                <button class="label">${g.label}${caret}</button>
              </div>`
            )}
          </div>
        </div>
      </div>

      <main class="view">
        <fusion-scene class="backdrop"></fusion-scene>
        <div class="overlay">
          <div>
            <div class="panel">${icon("collapse", "s7")}<span class="text">BROWSER</span>${icon("dotMinus", "s7")}</div>
            <ul class="tree">
              <li class="node root">
                ${icon("triOpen", "s7")}
                <label class="chip">${icon("eye", "s10")}<span class="current">${icon("body", "s10")}<span class="text">O_D_Nietzange v3</span></span><input class="radio" type="radio" checked /></label>
              </li>
              ${nodes.map(
                (n) => html`<li class="node">${icon("triRight", "s8")}<span class="chip">${n.icons.map((i) => icon(i, i === "gear" ? "s8" : "s10"))}<span class="text">${n.label}</span></span></li>`
              )}
            </ul>
          </div>
          <div class="foot">
            <div class="panel notes"><span class="text">KOMMENTARE</span>${icon("dotPlus", "s7")}</div>
            <div class="nav">
              <button aria-label="Orbit">${icon("orbit", "s10")}${caret}</button>
              <button aria-label="Ansicht nach">${icon("look", "s10")}</button>
              <button aria-label="Pan">${icon("hand", "s12")}</button>
              <button aria-label="Zoom">${icon("zoom", "s12")}</button>
              <button aria-label="Einpassen">${icon("fit", "s12")}${caret}</button>
              <button aria-label="Anzeige">${icon("screen", "s10")}${caret}</button>
              <button aria-label="Raster">${icon("mesh", "s10")}${caret}</button>
              <button aria-label="Ansichtsfenster">${icon("views", "s10")}${caret}</button>
            </div>
          </div>
        </div>
      </main>

      <div class="timeline">
        <div class="play">${["first", "prev", "play", "next", "last"].map((p) => html`<button aria-label=${p}>${icon(p, "s10")}</button>`)}</div>
        <div class="features">${features.map((f) => html`<span class="feature">${icon(f, "s12")}</span>`)}</div>
        <span class="marker"></span>
        <button class="settings" aria-label="Einstellungen">${icon("gear", "s10")}</button>
      </div>

      <footer class="task">
        <button class="start" aria-label="Start">${icon("win", "s12")}</button>
        <label class="find">${icon("search", "s12")}<input type="text" placeholder="Suchen" aria-label="Suchen" /></label>
        ${apps.map(
          (a) => html`<button class=${classMap({ "app-btn": true, open: !!a.open, active: !!a.active })} aria-label=${a.icon}>
            ${icon(a.icon, a.icon === "taskview" ? "s12" : "s16")}${a.badge ? html`<span class="badge">${a.badge}</span>` : nothing}
          </button>`
        )}
        <div class="tray">
          <button class="links">Links</button>
          ${["chevron", "cam", "battery", "wifi", "sound", "pen"].map((t) => html`<button aria-label=${t}>${icon(t, "s10")}</button>`)}
          <div class="clock"><div>13:53</div><div>30.12.2023</div></div>
          <button class="notify" aria-label="Info-Center">${icon("note", "s12")}<span class="badge">4</span></button>
        </div>
      </footer>
    </div>`;
  }
}
